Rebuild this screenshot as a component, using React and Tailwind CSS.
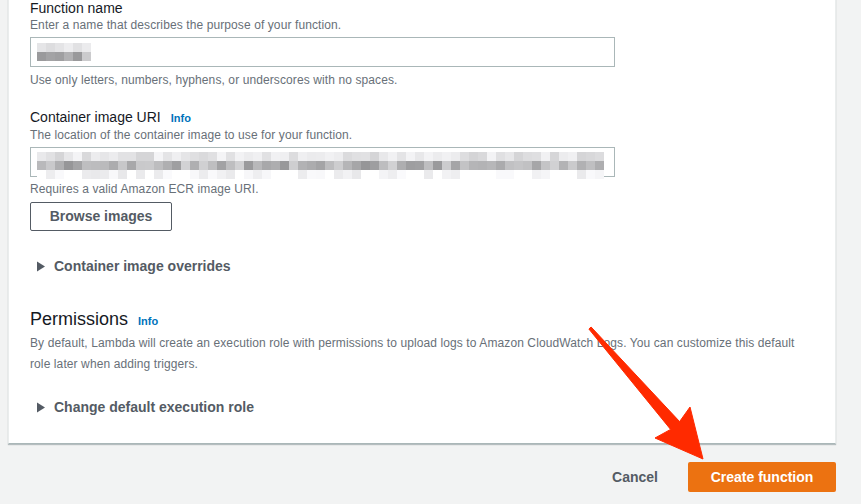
import React from 'react'

function seeded(seed) {
  let s = seed
  return () => {
    s = (s * 9301 + 49297) % 233280
    return s / 233280
  }
}

// blurred-out input values, drawn as grey pixel blocks
function Pixelated({ count, seed, rows }) {
  const rnd = seeded(seed)
  const data = rows.map(([lo, hi, chance]) =>
    Array.from({ length: count }, () => (rnd() < chance ? Math.round(lo + rnd() * (hi - lo)) : 255))
  )
  return (
    <div className="flex flex-col">
      {data.map((row, r) => (
        <div key={r} className="flex h-[9px]">
          {row.map((v, i) => (
            <div key={i} className="w-[9px] h-full" style={{ backgroundColor: `rgb(${v},${v},${v + 2})` }} />
          ))}
        </div>
      ))}
    </div>
  )
}

const Info = ({ className = '' }) => (
  <span className={`text-[11px] font-bold text-[#0073bb] ${className}`}>Info</span>
)

const Expander = ({ label, className = '' }) => (
  <div className={`flex items-center h-[20px] pl-[6px] ${className}`}>
    <svg width="10" height="11" viewBox="0 0 10 11" className="mr-[8px]">
      <path d="M1 0.5 L9 5.5 L1 10.5 Z" fill="#545b64" />
    </svg>
    <span className="text-[14px] font-bold text-[#545b64] leading-[20px]">{label}</span>
  </div>
)

export default function App() {
  return (
    <div className="relative w-[861px] h-[504px] overflow-hidden bg-[#f2f3f3] font-['Liberation_Sans',Arial,sans-serif]">
      <div className="pl-[8px] pr-[25px]">
        <div className="-mt-[12px] pt-[10px] pb-[26px] pl-[21px] bg-white border border-[#eaeded] border-b-[#aab7b8] shadow-[0_1px_1px_0_rgba(0,28,36,0.25)]">
          <div className="text-[14px] leading-[18px] text-[#16191f]">Function name</div>
          <div className="text-[12px] leading-[16px] tracking-[0.1px] text-[#687078]">Enter a name that describes the purpose of your function.</div>
          <div className="mt-[4px] w-[585px] h-[30px] border border-[#aab7b8] pl-[6px] pt-[5px]">
            <Pixelated count={6} seed={7} rows={[[215, 240, 1], [150, 205, 1]]} />
          </div>
          <div className="mt-[5px] text-[12px] leading-[16px] tracking-[0.1px] text-[#687078]">
            Use only letters, numbers, hyphens, or underscores with no spaces.
          </div>

          <div className="mt-[20px] flex items-baseline gap-[10px] text-[14px] leading-[18px] text-[#16191f]">
            <span>Container image URI</span>
            <Info />
          </div>
          <div className="text-[12px] leading-[16px] tracking-[0.1px] text-[#687078]">The location of the container image to use for your function.</div>
          <div className="mt-[4px] w-[585px] h-[30px] border border-[#aab7b8] pl-[6px] pt-[4px]">
            <Pixelated count={63} seed={31} rows={[[212, 245, 1], [150, 210, 1], [232, 250, 0.6]]} />
          </div>
          <div className="mt-[4px] text-[12px] leading-[16px] tracking-[0.1px] text-[#687078]">Requires a valid Amazon ECR image URI.</div>
          <button className="mt-[5px] w-[142px] h-[29px] border border-[#545b64] rounded-[2px] text-[14px] font-bold text-[#545b64] bg-white">
            Browse images
          </button>

          <Expander label="Container image overrides" className="mt-[25px]" />

          <div className="mt-[31px] flex items-baseline gap-[10px]">
            <span className="text-[18px] leading-[24px] text-[#16191f]">Permissions</span>
            <Info />
          </div>
          <div className="mt-[2px] pr-[18px] text-[12px] leading-[21px] tracking-[0.1px] text-[#687078]">
            By default, Lambda will create an execution role with permissions to upload logs to Amazon CloudWatch Logs. You can customize this default role later when adding triggers.
          </div>

          <Expander label="Change default execution role" className="mt-[22px]" />
        </div>

        <div className="mt-[18px] flex justify-end items-center">
          <button className="h-[29px] px-[20px] text-[14px] font-bold text-[#545b64]">Cancel</button>
          <button className="ml-[10px] w-[148px] h-[30px] rounded-[2px] bg-[#ec7211] text-[14px] font-bold text-white">
            Create function
          </button>
        </div>
      </div>

      <svg className="absolute inset-0 pointer-events-none" width="861" height="504">
        <polygon
          points="591.1,327 679.6,421.6 690,407 703,459 655,438 670.6,429.4 588.9,329"
          fill="#ff2a00"
          stroke="#ff2a00"
          strokeWidth="1"
          strokeLinejoin="round"
        />
      </svg>
    </div>
  )
}
